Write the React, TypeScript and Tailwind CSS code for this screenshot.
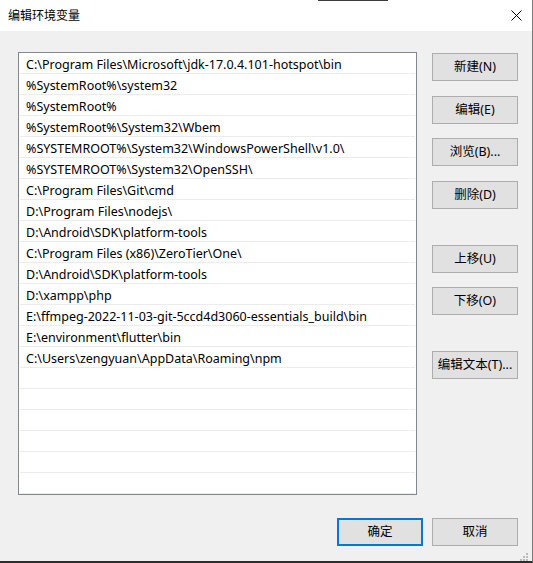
import React from 'react';

const paths = [
  'C:\\Program Files\\Microsoft\\jdk-17.0.4.101-hotspot\\bin',
  '%SystemRoot%\\system32',
  '%SystemRoot%',
  '%SystemRoot%\\System32\\Wbem',
  '%SYSTEMROOT%\\System32\\WindowsPowerShell\\v1.0\\',
  '%SYSTEMROOT%\\System32\\OpenSSH\\',
  'C:\\Program Files\\Git\\cmd',
  'D:\\Program Files\\nodejs\\',
  'D:\\Android\\SDK\\platform-tools',
  'C:\\Program Files (x86)\\ZeroTier\\One\\',
  'D:\\Android\\SDK\\platform-tools',
  'D:\\xampp\\php',
  'E:\\ffmpeg-2022-11-03-git-5ccd4d3060-essentials_build\\bin',
  'E:\\environment\\flutter\\bin',
  'C:\\Users\\zengyuan\\AppData\\Roaming\\npm',
];

const TOTAL_ROWS = 21;

function WinButton({ label, primary, className }: { label: string; primary?: boolean; className?: string }) {
  return (
    <button
      className={
        'h-[28px] w-[86px] flex items-center justify-center bg-[#e1e1e1] text-[12.5px] text-black ' +
        (primary ? 'border-2 border-[#0078d7] ' : 'border border-[#adadad] ') +
        (className ?? '')
      }
    >
      {label}
    </button>
  );
}

export default function App() {
  const rows = Array.from({ length: TOTAL_ROWS }, (_, i) => paths[i] ?? '');

  return (
    <div
      className="w-[533px] h-[563px] flex flex-col bg-[#f0f0f0] border-r border-[#7a7a7a] border-b-2 border-b-[#2d2d2d] overflow-hidden"
      style={{ fontFamily: '"Noto Sans", "Noto Sans CJK SC", sans-serif' }}
    >
      {/* window edge */}
      <div className="h-px flex bg-white">
        <div className="w-[318px]" />
        <div className="w-[70px] bg-[#3c3c3c]" />
      </div>

      {/* Title bar */}
      <div className="h-[30px] bg-white flex items-center justify-between pl-[8px] pr-[10px]">
        <span className="text-[12px] text-black mb-[2px]" style={{ fontFamily: '"Noto Sans CJK SC", sans-serif' }}>
          编辑环境变量
        </span>
        <svg width="11" height="11" viewBox="0 0 11 11" className="mb-[2px]">
          <path d="M0.5 0.5 L10.5 10.5 M10.5 0.5 L0.5 10.5" stroke="#000" strokeWidth="1" />
        </svg>
      </div>

      {/* Body */}
      <div className="flex pt-[21px] pl-[18px]">
        <div className="w-[399px] h-[443px] border border-[#828790] bg-white overflow-hidden">
          {rows.map((p, i) => (
            <div key={i}>
              <div className="h-[20px] flex items-center pl-[7px] pt-[4px] text-[12.5px] text-black whitespace-nowrap leading-none">
                {p}
              </div>
              <div className="h-px mx-px bg-[#ececec]" />
            </div>
          ))}
        </div>

        <div className="ml-[15px] flex flex-col">
          <WinButton label="新建(N)" className="mt-px" />
          <WinButton label="编辑(E)" className="mt-[15px]" />
          <WinButton label="浏览(B)..." className="mt-[14px]" />
          <WinButton label="删除(D)" className="mt-[15px]" />
          <WinButton label="上移(U)" className="mt-[36px]" />
          <WinButton label="下移(O)" className="mt-[14px]" />
          <WinButton label="编辑文本(T)..." className="mt-[36px]" />
        </div>
      </div>

      {/* Footer */}
      <div className="flex justify-end gap-[9px] pr-[14px] mt-[23px]">
        <WinButton label="确定" primary />
        <WinButton label="取消" />
      </div>

      {/* Resize grip */}
      <div className="flex justify-end pr-[3px] mt-[7px]">
        <svg width="9" height="8" viewBox="0 0 9 8">
          <rect x="6" y="0" width="2" height="2" fill="#bcbcbc" />
          <rect x="3" y="3" width="2" height="2" fill="#bcbcbc" />
          <rect x="6" y="3" width="2" height="2" fill="#bcbcbc" />
          <rect x="0" y="6" width="2" height="2" fill="#bcbcbc" />
          <rect x="3" y="6" width="2" height="2" fill="#bcbcbc" />
          <rect x="6" y="6" width="2" height="2" fill="#bcbcbc" />
        </svg>
      </div>
    </div>
  );
}
